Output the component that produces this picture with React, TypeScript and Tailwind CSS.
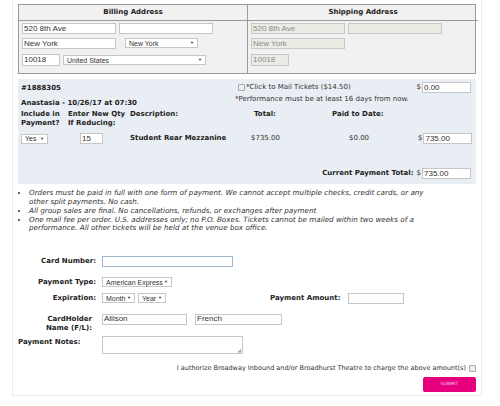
import React from "react";

const verdana = { fontFamily: '"DejaVu Sans", Verdana, sans-serif' };
const arial = { fontFamily: '"Liberation Sans", Arial, sans-serif' };

function Box({ w, value, disabled, focus, h = "h-[11px]" }: { w: string; value?: string; disabled?: boolean; focus?: boolean; h?: string }) {
    return (
        <div
            className={`${w} ${h} flex items-center px-[1px] text-[8px] leading-none border ${
                disabled ? "bg-[#ebebe4] border-[#c8c8c8] text-[#8a8a8a]" : focus ? "bg-white border-[#9fb6d0]" : "bg-white border-[#c6c6c6] text-[#333]"
            }`}
            style={arial}
        >
            {value}
        </div>
    );
}

function Select({ w, value }: { w: string; value: string }) {
    return (
        <div
            className={`${w} h-[10px] flex items-center justify-between px-[3px] text-[7px] leading-none border border-[#c6c6c6] bg-white text-[#333]`}
            style={arial}
        >
            <span>{value}</span>
            <span className="text-[4px]">▼</span>
        </div>
    );
}

function Check() {
    return <div className="w-[7px] h-[7px] border border-[#aaa] bg-[#eee] rounded-[1px]" />;
}

function Money({ value }: { value: string }) {
    return (
        <div className="flex items-center gap-[1px]">
            <span className="text-[7px] text-[#333]">$</span>
            <Box w="w-[49px]" value={value} />
        </div>
    );
}

export default function App() {
    return (
        <div className="w-[500px] h-[406px] bg-white text-[#222] overflow-hidden" style={verdana}>
            <div className="mx-[12px] w-[470px] border-x border-b border-[#ececec] px-[5px] pt-[4px] pb-[3px]">
                {/* addresses */}
                <div className="grid grid-cols-[229px_230px] border border-[#9a9a9a] bg-[#f1f1f1] h-[70px]">
                    <div className="border-r border-[#9a9a9a]">
                        <div className="h-[16px] border-b border-[#9a9a9a] flex items-center justify-center text-[7px] font-bold">Billing Address</div>
                        <div className="flex flex-col gap-[4px] pl-[3px] pt-[2px]">
                            <div className="flex gap-[3px]">
                                <Box w="w-[94px]" value="520 8th Ave" />
                                <Box w="w-[94px]" />
                            </div>
                            <div className="flex gap-[9px]">
                                <Box w="w-[94px]" value="New York" />
                                <Select w="w-[73px]" value="New York" />
                            </div>
                            <div className="flex gap-[3px] items-center pt-[1px]">
                                <Box w="w-[38px]" h="h-[12px]" value="10018" />
                                <Select w="w-[143px]" value="United States" />
                            </div>
                        </div>
                    </div>
                    <div>
                        <div className="h-[16px] border-b border-[#9a9a9a] flex items-center justify-center text-[7px] font-bold">Shipping Address</div>
                        <div className="flex flex-col gap-[4px] pl-[3px] pt-[2px]">
                            <div className="flex gap-[3px]">
                                <Box w="w-[94px]" value="520 8th Ave" disabled />
                                <Box w="w-[94px]" disabled />
                            </div>
                            <Box w="w-[94px]" value="New York" disabled />
                            <div className="pt-[1px]">
                                <Box w="w-[38px]" h="h-[12px]" value="10018" disabled />
                            </div>
                        </div>
                    </div>
                </div>

                {/* order panel */}
                <div className="mt-[5px] bg-[#e9eef4] h-[105px] px-[3px] pt-[3px] text-[7px]">
                    <div className="grid grid-cols-[214px_1fr]">
                        <div className="flex flex-col gap-[4px] pt-[1px] font-bold">
                            <div>#1888305</div>
                            <div>Anastasia - 10/26/17 at 07:30</div>
                        </div>
                        <div className="flex flex-col">
                            <div className="flex items-center justify-between pr-[2px]">
                                <div className="flex items-center gap-[1px] pl-[3px] text-[#333]">
                                    <Check />
                                    <span>*Click to Mail Tickets ($14.50)</span>
                                </div>
                                <Money value="0.00" />
                            </div>
                            <div className="text-[#333] mt-[1px]">*Performance must be at least 16 days from now.</div>
                        </div>
                    </div>
                    <div className="grid grid-cols-[47px_62px_121px_79px_88px_1fr] mt-[2px] font-bold leading-[9px]">
                        <div>Include in<br />Payment?</div>
                        <div>Enter New Qty<br />If Reducing:</div>
                        <div>Description:</div>
                        <div className="pl-[3px]">Total:</div>
                        <div className="pl-[2px]">Paid to Date:</div>
                        <div />
                    </div>
                    <div className="grid grid-cols-[47px_62px_121px_79px_88px_1fr] mt-[5px] items-center">
                        <div><Select w="w-[27px]" value="Yes" /></div>
                        <div className="pl-[12px]"><Box w="w-[23px]" value="15" /></div>
                        <div className="font-bold">Student Rear Mezzanine</div>
                        <div className="text-[#333]">$735.00</div>
                        <div className="text-[#333] pl-[19px]">$0.00</div>
                        <div><Money value="735.00" /></div>
                    </div>
                    <div className="flex justify-end items-center gap-[3px] mt-[24px] pr-[2px]">
                        <span className="font-bold">Current Payment Total:</span>
                        <Money value="735.00" />
                    </div>
                </div>

                {/* notes */}
                <ul className="list-disc pl-[11px] mt-[5px] text-[7.2px] italic leading-[8.5px] text-[#333] flex flex-col gap-[0.5px] pr-[50px]">
                    <li>Orders must be paid in full with one form of payment. We cannot accept multiple checks, credit cards, or any other split payments. No cash.</li>
                    <li>All group sales are final. No cancellations, refunds, or exchanges after payment</li>
                    <li>One mail fee per order. U.S. addresses only; no P.O. Boxes. Tickets cannot be mailed within two weeks of a performance. All other tickets will be held at the venue box office.</li>
                </ul>

                {/* payment form */}
                <div className="mt-[23px] text-[7px] flex flex-col">
                    <div className="flex items-center h-[11px]">
                        <div className="w-[78px] text-right font-bold">Card Number:</div>
                        <div className="pl-[6px]"><Box w="w-[131px]" focus /></div>
                    </div>
                    <div className="flex items-center h-[11px] mt-[10px]">
                        <div className="w-[78px] text-right font-bold">Payment Type:</div>
                        <div className="pl-[6px]"><Select w="w-[70px]" value="American Express" /></div>
                    </div>
                    <div className="flex items-center h-[11px] mt-[5px]">
                        <div className="w-[78px] text-right font-bold">Expiration:</div>
                        <div className="pl-[6px] flex gap-[3px]">
                            <Select w="w-[33px]" value="Month" />
                            <Select w="w-[28px]" value="Year" />
                        </div>
                        <div className="ml-[104px] font-bold">Payment Amount:</div>
                        <div className="pl-[8px]"><Box w="w-[56px]" /></div>
                    </div>
                    <div className="flex items-start mt-[10px]">
                        <div className="w-[74px] text-right font-bold leading-[9px] pt-[1px]">CardHolder<br />Name (F/L):</div>
                        <div className="pl-[10px] flex gap-[8px]">
                            <Box w="w-[85px]" value="Allison" />
                            <Box w="w-[87px]" value="French" />
                        </div>
                    </div>
                    <div className="flex items-start mt-[3px]">
                        <div className="w-[84px] font-bold pt-[1px]">Payment Notes:</div>
                        <div className="w-[141px] h-[18px] border border-[#c6c6c6] bg-white relative">
                            <span className="absolute right-[1px] bottom-0 text-[5px] text-[#aaa] leading-none">◢</span>
                        </div>
                    </div>
                    <div className="flex justify-end items-center gap-[3px] mt-[10px] text-[6.5px] text-[#333]">
                        <span>I authorize Broadway Inbound and/or Broadhurst Theatre to charge the above amount(s)</span>
                        <Check />
                    </div>
                    <div className="flex justify-end mt-[4px]">
                        <button className="w-[53px] h-[15px] bg-[#e6007e] rounded-[2px] text-[#fbd3ea] text-[4.5px] tracking-wide">SUBMIT</button>
                    </div>
                </div>
            </div>
        </div>
    );
}
